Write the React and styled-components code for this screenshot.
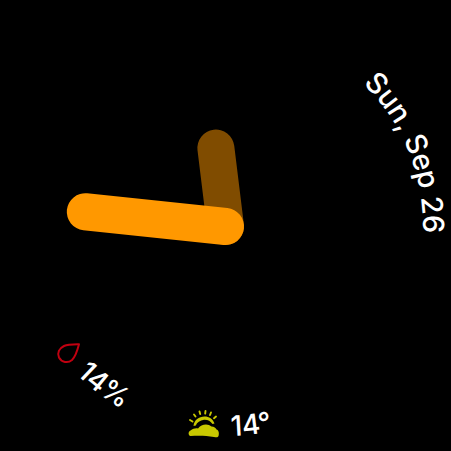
import React from 'react';
import styled, { createGlobalStyle } from 'styled-components';

const Global = createGlobalStyle`
  html, body {
    margin: 0;
    background: #000;
  }
`;

const Face = styled.div`
  position: relative;
  width: 451px;
  height: 451px;
  background: #000;
  overflow: hidden;
`;

const Hand = styled.div`
  position: absolute;
  left: 207px;
  top: ${p => 207.5 - p.$length}px;
  width: 37px;
  height: ${p => p.$length + 37}px;
  border-radius: 18.5px;
  background: ${p => p.$color};
  transform-origin: 18.5px ${p => p.$length + 18.5}px;
  transform: rotate(${p => p.$angle}deg);
`;

const Dial = styled.svg`
  position: absolute;
  left: 0;
  top: 0;
`;

const DialText = styled.text`
  font-family: Inter, Roboto, sans-serif;
  font-size: ${p => p.$size}px;
  font-weight: 500;
  letter-spacing: ${p => p.$spacing || 0}px;
  fill: #fff;
`;

const DropIcon = styled.svg`
  position: absolute;
  left: 55px;
  top: 341px;
`;

const WeatherIcon = styled.svg`
  position: absolute;
  left: 187px;
  top: 409px;
`;

function Drop() {
  return (
    <DropIcon width="26" height="26" viewBox="0 0 26 26">
      <path
        d="M24 3.2 C20 3.2 13 3 9 5 C4 7.5 2 12 4 16.5 C6.5 21.5 13 22.5 17 19 C20.5 15.5 22.5 9 24 3.2 Z"
        fill="none"
        stroke="#c00010"
        strokeWidth="2"
        strokeLinejoin="round"
      />
    </DropIcon>
  );
}

function Weather() {
  const rays = [
    [3, 11, 5.5, 12.5],
    [7, 5.5, 8.5, 7.5],
    [12.5, 2.5, 13.2, 5],
    [18.5, 2, 18.2, 4.6],
    [24, 3.5, 23, 6],
    [29, 7.5, 27, 9.2]
  ];
  return (
    <WeatherIcon width="34" height="30" viewBox="0 0 34 30">
      <g stroke="#c8c800" strokeWidth="1.9" strokeLinecap="round">
        {rays.map((r, i) => (
          <line key={i} x1={r[0]} y1={r[1]} x2={r[2]} y2={r[3]} />
        ))}
      </g>
      <path
        d="M6.5 17 C7 11 12 7.5 17.5 7.5 C22 7.5 26 10 27.5 14.5 L25.5 15 C23.5 12 20.5 10.5 17 10.8 C13 11.2 10 13.5 8.8 16.5 Z"
        fill="#c8c800"
      />
      <path
        d="M3.5 27 C1 26.5 1 22.5 3.5 21.5 C6 19.5 9 19 11 19.5 C14 15 21 14 24.5 17.5 C27 17.5 29 19 29.5 20.5 C31.5 21 32.5 24 31.5 27 C31 28.5 29.5 28.5 27 28 C19 26.5 11 26.5 3.5 27 Z"
        fill="#c8c800"
      />
    </WeatherIcon>
  );
}

export default function App() {
  return (
    <Face>
      <Global />
      <Hand $color="#804c00" $length={79} $angle={353} />
      <Hand $color="#ff9800" $length={141} $angle={276} />
      <Dial width="451" height="451" viewBox="0 0 451 451">
        <defs>
          <path id="outer" d="M225.5 28 A197.5 197.5 0 1 1 225.4 28 Z" />
          <path id="inner" d="M225.5 436 A210.5 210.5 0 1 0 225.4 436 Z" />
        </defs>
        <DialText $size={29} $spacing={-0.2}>
          <textPath href="#outer" startOffset="152">Sun, Sep 26</textPath>
        </DialText>
        <DialText $size={28}>
          <textPath href="#inner" startOffset="6">14°</textPath>
        </DialText>
        <DialText $size={28}>
          <textPath href="#inner" startOffset="1156">14%</textPath>
        </DialText>
      </Dial>
      <Drop />
      <Weather />
    </Face>
  );
}
